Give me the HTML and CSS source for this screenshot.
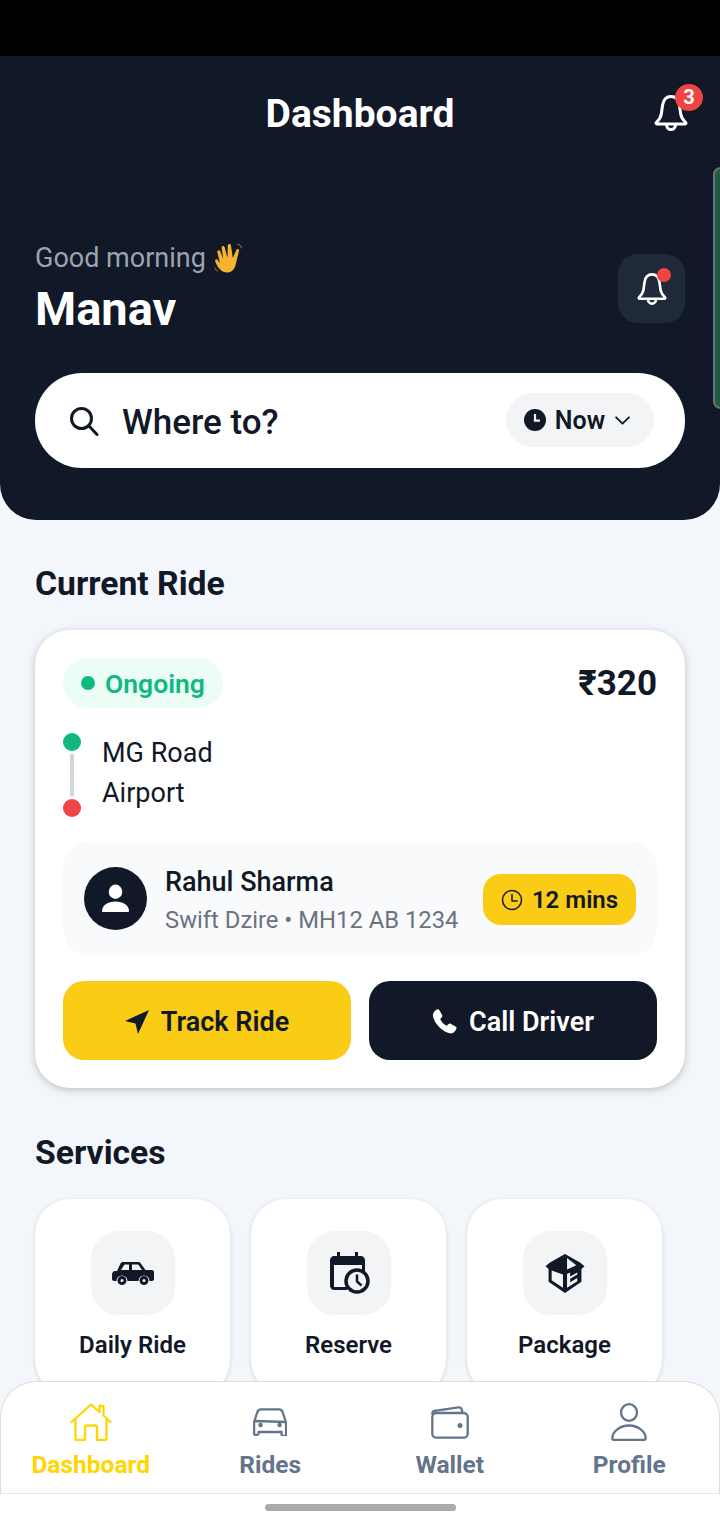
FILE: index.html
```html
<!DOCTYPE html>
<html lang="en">
<head>
    <meta charset="UTF-8">
    <meta name="viewport" content="width=device-width, initial-scale=1.0">
    <title>Dashboard</title>
    <link rel="stylesheet" href="styles.css">
</head>
<body>
    <div class="app">
        <div class="status-bar"></div>

        <header class="hero">
            <div class="topbar">
                <h1>Dashboard</h1>
                <button class="top-bell" aria-label="Notifications">
                    <svg class="bell-lg" viewBox="0 0 34 38" fill="none" stroke="#fff" stroke-width="3" stroke-linejoin="round" stroke-linecap="round">
                        <path d="M17 2.500c-4.600 0-7.600 3.600-8.400 8.500L7.300 20c-.5 3.300-2.300 6-5 8.500-.6.700-.2 1.500.6 1.500h28.200c.8 0 1.200-.8.600-1.500-2.700-2.500-4.500-5.200-5-8.500L25.400 11C24.600 6.100 21.600 2.500 17 2.500z"/>
                        <path d="M12.500 30.500c0 3 2 5 4.500 5s4.500-2 4.500-5"/>
                    </svg>
                    <span class="count">3</span>
                </button>
            </div>

            <div class="greeting">
                <div>
                    <p class="hello">Good morning
                        <svg class="wave" viewBox="0 0 28 30" role="img" aria-label="waving hand">
                            <path fill="#f5b32f" d="M8 27c-3-2.500-5-6-6-9-.5-1.500 1.500-2.500 2.500-1l2 3L4 9.500c-.4-1.800 2-2.500 2.700-.8L9.500 16 8 5.500C7.700 3.600 10.200 3 10.800 4.800L13.500 15 13.800 3.500c0-2 2.600-2.200 3-.2L18.500 15l3.300-7.500c.8-1.700 3-.8 2.500 1L21.500 20c-1 5-3 8-7 8.500-2.500.3-4.700 0-6.500-1.500z"/>
                            <path fill="none" stroke="#8a6a2a" stroke-width="1" d="M23 2c2 .5 3.500 2 4 4M1.500 24c.5 1.500 1.500 2.700 3 3.500"/>
                        </svg>
                    </p>
                    <p class="name">Manav</p>
                </div>
                <button class="bell-box" aria-label="Alerts">
                    <svg class="bell-sm" viewBox="0 0 34 38" fill="none" stroke="#fff" stroke-width="3" stroke-linejoin="round" stroke-linecap="round">
                        <path d="M17 2.500c-4.600 0-7.600 3.600-8.400 8.500L7.300 20c-.5 3.300-2.300 6-5 8.500-.6.700-.2 1.500.6 1.500h28.200c.8 0 1.200-.8.600-1.500-2.700-2.500-4.500-5.200-5-8.500L25.400 11C24.600 6.100 21.600 2.500 17 2.500z"/>
                        <path d="M12.500 30.500c0 3 2 5 4.500 5s4.500-2 4.500-5"/>
                    </svg>
                    <span class="dot"></span>
                </button>
            </div>

            <div class="search">
                <svg class="search-icon" viewBox="0 0 30 30" fill="none" stroke="#111827" stroke-width="3" stroke-linecap="round">
                    <circle cx="12.500" cy="12.500" r="10"/>
                    <path d="M20 20l8 8.500"/>
                </svg>
                <span class="where">Where to?</span>
                <div class="now">
                    <svg class="now-clock" viewBox="0 0 20 20">
                        <circle cx="10" cy="10" r="10" fill="#111827"/>
                        <path d="M10 4.500V10.500H14.500" fill="none" stroke="#f3f4f6" stroke-width="2"/>
                    </svg>
                    <span>Now</span>
                    <svg class="chevron" viewBox="0 0 18 12" fill="none" stroke="#111827" stroke-width="2" stroke-linecap="round" stroke-linejoin="round">
                        <path d="M2 2.500l7 7 7-7"/>
                    </svg>
                </div>
            </div>
        </header>

        <main class="content">
            <h2>Current Ride</h2>
            <section class="ride-card">
                <div class="ride-top">
                    <span class="status"><i></i>Ongoing</span>
                    <span class="fare">₹320</span>
                </div>

                <div class="route">
                    <div class="route-line">
                        <i class="stop green"></i>
                        <i class="bar"></i>
                        <i class="stop red"></i>
                    </div>
                    <div class="route-names">
                        <p>MG Road</p>
                        <p>Airport</p>
                    </div>
                </div>

                <div class="driver">
                    <div class="avatar">
                        <svg viewBox="0 0 28 30" fill="#fff">
                            <ellipse cx="14" cy="8" rx="7" ry="7.500"/>
                            <path d="M1 29c-.5 0-1-.5-1-1 0-6 6-10 14-10s14 4 14 10c0 .5-.5 1-1 1z"/>
                        </svg>
                    </div>
                    <div class="driver-info">
                        <p class="driver-name">Rahul Sharma</p>
                        <p class="driver-car">Swift Dzire • MH12 AB 1234</p>
                    </div>
                    <span class="eta">
                        <svg viewBox="0 0 22 22" fill="none" stroke="#111827" stroke-width="1.500" stroke-linecap="round" stroke-linejoin="round">
                            <circle cx="11" cy="11" r="9.500"/>
                            <path d="M11 5.500V12H16"/>
                        </svg>
                        12 mins
                    </span>
                </div>

                <div class="actions">
                    <button class="btn btn-track">
                        <svg viewBox="0 0 24 24" fill="#111827"><path d="M24 0L0 11l10.500 2.500L13 24z"/></svg>
                        Track Ride
                    </button>
                    <button class="btn btn-call">
                        <svg class="phone" viewBox="0 0 26 26" fill="#fff"><path d="M5 .5C6 0 7.200.3 7.700 1.300l2.800 5c.4.800.3 1.700-.3 2.300L8.500 10.300c1.300 3 3.600 5.600 6.800 7.200l1.700-1.700c.6-.6 1.500-.8 2.300-.4l5.200 2.700c1 .5 1.300 1.700.8 2.700-1.300 2.800-3.400 4.700-5.800 4.600C11.500 24.800 1.500 14.500 1 6.800.8 4.200 2.500 1.800 5 .5z"/></svg>
                        Call Driver
                    </button>
                </div>
            </section>

            <h2 class="services-title">Services</h2>
            <section class="services">
                <div class="service">
                    <div class="service-icon">
                        <svg class="icon-car" viewBox="0 0 42 24" fill="#111827">
                            <path fill-rule="evenodd" d="M11 1h15c1 0 2 .4 2.600 1.200L33.500 9H40c1 0 2 1 2 2v7c0 1-.8 2-2 2h-2.500a5.500 5.500 0 0 0-11 0h-11a5.500 5.500 0 0 0-11 0H2c-1 0-2-1-2-2v-4c0-2 1-4 3-4h2l3.500-7.500C9 1.500 10 1 11 1zm1.500 2.500L9 9h8V3.500zM20 3.500V9h10l-3.800-5.500z"/>
                            <path fill-rule="evenodd" d="M10 15a4.500 4.500 0 1 1 0 9 4.500 4.500 0 0 1 0-9zm0 3a1.500 1.500 0 1 0 0 3 1.500 1.500 0 0 0 0-3zM32 15a4.500 4.500 0 1 1 0 9 4.500 4.500 0 0 1 0-9zm0 3a1.500 1.500 0 1 0 0 3 1.500 1.500 0 0 0 0-3z"/>
                        </svg>
                    </div>
                    <span>Daily Ride</span>
                </div>
                <div class="service">
                    <div class="service-icon">
                        <svg class="icon-cal" viewBox="0 0 40 42">
                            <path fill="#111827" d="M7 0h3v4h15V0h3v4h3c2 0 4 2 4 4v12h-3v-7H4v22h13v3H4c-2 0-4-2-4-4V8c0-2 2-4 4-4h3z"/>
                            <circle cx="27" cy="29" r="11" fill="none" stroke="#111827" stroke-width="3.500"/>
                            <path d="M27 22.500V29.500l4.500 4" fill="none" stroke="#111827" stroke-width="2.500"/>
                        </svg>
                    </div>
                    <span>Reserve</span>
                </div>
                <div class="service">
                    <div class="service-icon">
                        <svg class="icon-box" viewBox="0 0 38 38" fill="#111827">
                            <path fill-rule="evenodd" d="M19 0L34 8.500l4 3.500-3 2.500V27L19 38 3 27V14.500L0 12l4-3.500zM21 4v11l9-4zM6 16v9.500l11 7.500V20zM21 19.500v13.500l10-6.500v-3l-7 4v-3.500l7-4V18l-7 4v-4z"/>
                        </svg>
                    </div>
                    <span>Package</span>
                </div>
            </section>
        </main>

        <div class="side-tab"></div>

        <nav class="tabbar">
            <a class="tab active">
                <span class="tab-icon">
                    <svg class="nav-home" viewBox="0 0 42 38" fill="none" stroke="#ffd600" stroke-width="2.300" stroke-linecap="round" stroke-linejoin="round">
                        <path d="M1.500 19L21 1.500l8.500 7.500V3h4v9.500L40.500 19"/>
                        <path d="M5.500 16V35.500c0 .8.500 1.500 1.500 1.500H15V24c0-1 .5-1.500 1.500-1.500h9c1 0 1.500.5 1.500 1.500V37h8c1 0 1.500-.7 1.500-1.500V16"/>
                    </svg>
                </span>
                <span class="tab-label">Dashboard</span>
            </a>
            <a class="tab">
                <span class="tab-icon">
                    <svg class="nav-car" viewBox="0 0 34 28" fill="none" stroke="#64748b" stroke-width="2.300" stroke-linecap="round" stroke-linejoin="round">
                        <path d="M1.500 13L4 5C4.500 2.500 6 1.300 8 1.300h18c2 0 3.500 1.200 4 3.700l2.500 8"/>
                        <path d="M1.500 13c-.3.700-.4 1.500-.4 2.500v10c0 .8.400 1.300 1.200 1.300h2c.9 0 1.300-.5 1.300-1.300V24h23v2.500c0 .8.400 1.300 1.300 1.300h2c.8 0 1.200-.5 1.200-1.300v-10c0-1-.1-1.800-.4-2.500z"/>
                        <circle cx="7.500" cy="17" r="1.500" fill="#64748b" stroke-width="1.500"/>
                        <circle cx="26.500" cy="17" r="1.500" fill="#64748b" stroke-width="1.500"/>
                    </svg>
                </span>
                <span class="tab-label">Rides</span>
            </a>
            <a class="tab">
                <span class="tab-icon">
                    <svg class="nav-wallet" viewBox="0 0 38 33" fill="none" stroke="#64748b" stroke-width="2.300" stroke-linecap="round" stroke-linejoin="round">
                        <path d="M1.300 7.500c0-1.300 1-2.300 2.200-2.600l24-3.500c2-.3 3.500 1 3.500 3v2.600"/>
                        <rect x="1.300" y="7" width="35.400" height="24.700" rx="4"/>
                        <circle cx="29" cy="19.500" r="1.500" fill="#64748b" stroke-width="2"/>
                    </svg>
                </span>
                <span class="tab-label">Wallet</span>
            </a>
            <a class="tab">
                <span class="tab-icon">
                    <svg class="nav-user" viewBox="0 0 36 38" fill="none" stroke="#64748b" stroke-width="2.300" stroke-linecap="round" stroke-linejoin="round">
                        <ellipse cx="18" cy="9.500" rx="8" ry="8.300"/>
                        <path d="M1.300 35.500C1.300 28.500 9 22.500 18 22.500s16.700 6 16.700 13c0 .8-.5 1.300-1.500 1.300H2.800c-1 0-1.500-.5-1.500-1.300z"/>
                    </svg>
                </span>
                <span class="tab-label">Profile</span>
            </a>
        </nav>
        <div class="home-bar"><i></i></div>
    </div>
</body>
</html>
```

FILE: styles.css
```css
:root {
    --dark: #111827;
    --yellow: #facc15;
    --green: #10b981;
    --red: #ef4444;
    --muted: #64748b;
}

* { box-sizing: border-box; }
body, h1, h2, p { margin: 0; }
body {
    font-family: Roboto, "Liberation Sans", sans-serif;
    color: var(--dark);
    background: #fff;
}
button { font-family: inherit; border: none; padding: 0; }

.app {
    position: relative;
    width: 720px;
    height: 1520px;
    overflow: hidden;
    background: #f3f6fa;
}

.status-bar { height: 56px; background: #000; }

/* dark top part */
.hero {
    height: 464px;
    padding: 0 35px;
    background: var(--dark);
    border-radius: 0 0 36px 36px;
}

.topbar {
    height: 114px;
    padding-top: 2px;
    display: flex;
    align-items: center;
    justify-content: center;
    position: relative;
}
.topbar h1 { color: #fff; font-size: 39px; font-weight: 700; line-height: 1; }

.top-bell {
    position: absolute;
    right: -3px;
    top: 38px;
    width: 34px;
    height: 38px;
    background: none;
}
.bell-lg { display: block; width: 34px; height: 38px; }
.count {
    position: absolute;
    top: -10px;
    right: -15px;
    width: 28px;
    height: 27px;
    border-radius: 50%;
    background: var(--red);
    color: #fff;
    font-size: 20px;
    font-weight: 700;
    line-height: 27px;
    text-align: center;
}

.greeting {
    display: flex;
    justify-content: space-between;
    align-items: flex-start;
    margin-top: 72px;
}
.hello {
    display: flex;
    align-items: center;
    gap: 7px;
    color: #9ca3af;
    font-size: 27px;
    line-height: 32px;
}
.wave { width: 30px; height: 32px; }
.name { color: #fff; font-size: 47px; font-weight: 700; line-height: 56px; margin-top: 7px; }

.bell-box {
    position: relative;
    width: 67px;
    height: 69px;
    margin-top: 12px;
    border-radius: 20px;
    background: #1f2937;
    display: flex;
    align-items: center;
    justify-content: center;
}
.bell-sm { width: 30px; height: 34px; }
.dot {
    position: absolute;
    top: 14px;
    right: 14px;
    width: 14px;
    height: 14px;
    border-radius: 50%;
    background: var(--red);
}

.search {
    height: 95px;
    margin-top: 36px;
    padding: 0 31px 0 34px;
    display: flex;
    align-items: center;
    background: #fff;
    border-radius: 47px;
}
.search-icon { width: 30px; height: 30px; }
.where { flex: 1; margin: 3px 0 0 23px; font-size: 35px; font-weight: 500; }
.now {
    width: 148px;
    height: 54px;
    margin-bottom: 1px;
    padding-right: 5px;
    border-radius: 27px;
    background: #f3f4f6;
    display: flex;
    align-items: center;
    justify-content: center;
    gap: 9px;
    font-size: 25px;
    font-weight: 600;
}
.now-clock { width: 22px; height: 22px; }
.chevron { width: 17px; height: 11px; }

/* page content */
.content { padding: 45px 35px 0; }
.content h2 { font-size: 33.7px; font-weight: 700; line-height: 38px; }

.ride-card {
    height: 458px;
    margin-top: 27px;
    padding: 28px;
    background: #fff;
    border-radius: 35px;
    box-shadow: 0 2px 8px rgba(0, 0, 0, 0.22);
}

.ride-top { display: flex; justify-content: space-between; align-items: center; }
.status {
    height: 50px;
    width: 160px;
    border-radius: 25px;
    padding-left: 18px;
    display: flex;
    align-items: center;
    gap: 10px;
    background: #ecfdf5;
    color: var(--green);
    font-size: 26.5px;
    font-weight: 600;
}
.status i { width: 14px; height: 14px; border-radius: 50%; background: var(--green); }
.fare { font-size: 35px; font-weight: 700; padding-top: 1px; }

.route { display: flex; margin-top: 25px; height: 84px; }
.route-line { width: 18px; display: flex; flex-direction: column; align-items: center; }
.stop { width: 18px; height: 18px; border-radius: 50%; flex: none; }
.stop.green { background: var(--green); }
.stop.red { background: var(--red); }
.bar { width: 4px; height: 42px; margin: 3px 0; background: #d1d5db; }
.route-names { margin-left: 21px; font-size: 27px; line-height: 40px; }

.driver {
    height: 115px;
    margin-top: 24px;
    padding: 0 21px;
    display: flex;
    align-items: center;
    background: #f9fafb;
    border-radius: 28px;
}
.avatar {
    width: 63px;
    height: 63px;
    border-radius: 50%;
    background: var(--dark);
    display: flex;
    align-items: center;
    justify-content: center;
}
.avatar svg { width: 27px; height: 29px; }
.driver-info { flex: 1; margin: 4px 0 0 18px; }
.driver-name { font-size: 27px; font-weight: 500; line-height: 36px; }
.driver-car { font-size: 23.8px; color: #6b7280; line-height: 36px; margin-top: 2px; }
.eta {
    width: 153px;
    height: 51px;
    margin-top: 2px;
    border-radius: 18px;
    background: var(--yellow);
    display: flex;
    align-items: center;
    justify-content: center;
    gap: 9px;
    font-size: 24px;
    font-weight: 600;
}
.eta svg { width: 22px; height: 22px; }

.actions { display: flex; gap: 18px; margin-top: 25px; }
.btn {
    flex: 1;
    height: 79px;
    padding-top: 2px;
    border-radius: 21px;
    display: flex;
    align-items: center;
    justify-content: center;
    gap: 12px;
    font-size: 27px;
    font-weight: 600;
}
.btn svg { width: 24px; height: 24px; }
.btn svg.phone { width: 25px; height: 25px; }
.btn-track { background: var(--yellow); color: var(--dark); }
.btn-call { background: var(--dark); color: #fff; }

.content .services-title { margin-top: 46px; }

.services { display: flex; gap: 21px; margin-top: 27px; }
.service {
    width: 195px;
    height: 196px;
    padding-top: 32px;
    background: #fff;
    border-radius: 35px;
    box-shadow: 0 1px 4px rgba(0, 0, 0, 0.14);
    display: flex;
    flex-direction: column;
    align-items: center;
    font-size: 24px;
    font-weight: 600;
}
.service-icon {
    width: 84px;
    height: 84px;
    margin-bottom: 16px;
    border-radius: 28px;
    background: #f3f4f6;
    display: flex;
    align-items: center;
    justify-content: center;
}
.icon-car { width: 42px; height: 24px; }
.icon-cal { width: 40px; height: 42px; margin-left: 2px; }
.icon-box { width: 40px; height: 39px; }

/* strip of another card peeking in at the right edge */
.side-tab {
    position: absolute;
    top: 167px;
    right: -8px;
    width: 15px;
    height: 242px;
    border: 2px solid #6b7280;
    border-radius: 8px;
    background: #1f5b45;
}

/* bottom navigation */
.tabbar {
    position: absolute;
    left: 0;
    right: 0;
    top: 1381px;
    height: 113px;
    display: grid;
    grid-template-columns: repeat(4, 1fr);
    background: #fff;
    border: 1px solid #ddd;
    border-bottom-color: #e8e8e8;
    border-radius: 36px 36px 0 0;
}
.tab {
    display: flex;
    flex-direction: column;
    align-items: center;
    padding-top: 20px;
    color: var(--muted);
    font-size: 24.5px;
    font-weight: 700;
}
.tab-icon { height: 40px; display: flex; align-items: center; }
.nav-home { width: 42px; height: 38px; }
.nav-car { width: 34px; height: 28px; }
.nav-wallet { width: 38px; height: 33px; }
.nav-user { width: 36px; height: 38px; }
.tab-label { margin-top: 8px; line-height: 30px; }
.tab.active { color: #ffd600; }

.home-bar {
    position: absolute;
    left: 0;
    right: 0;
    top: 1494px;
    height: 26px;
    background: #fff;
    display: flex;
    justify-content: center;
    padding-top: 10px;
}
.home-bar i { width: 191px; height: 7px; border-radius: 4px; background: #aaa; }
```
